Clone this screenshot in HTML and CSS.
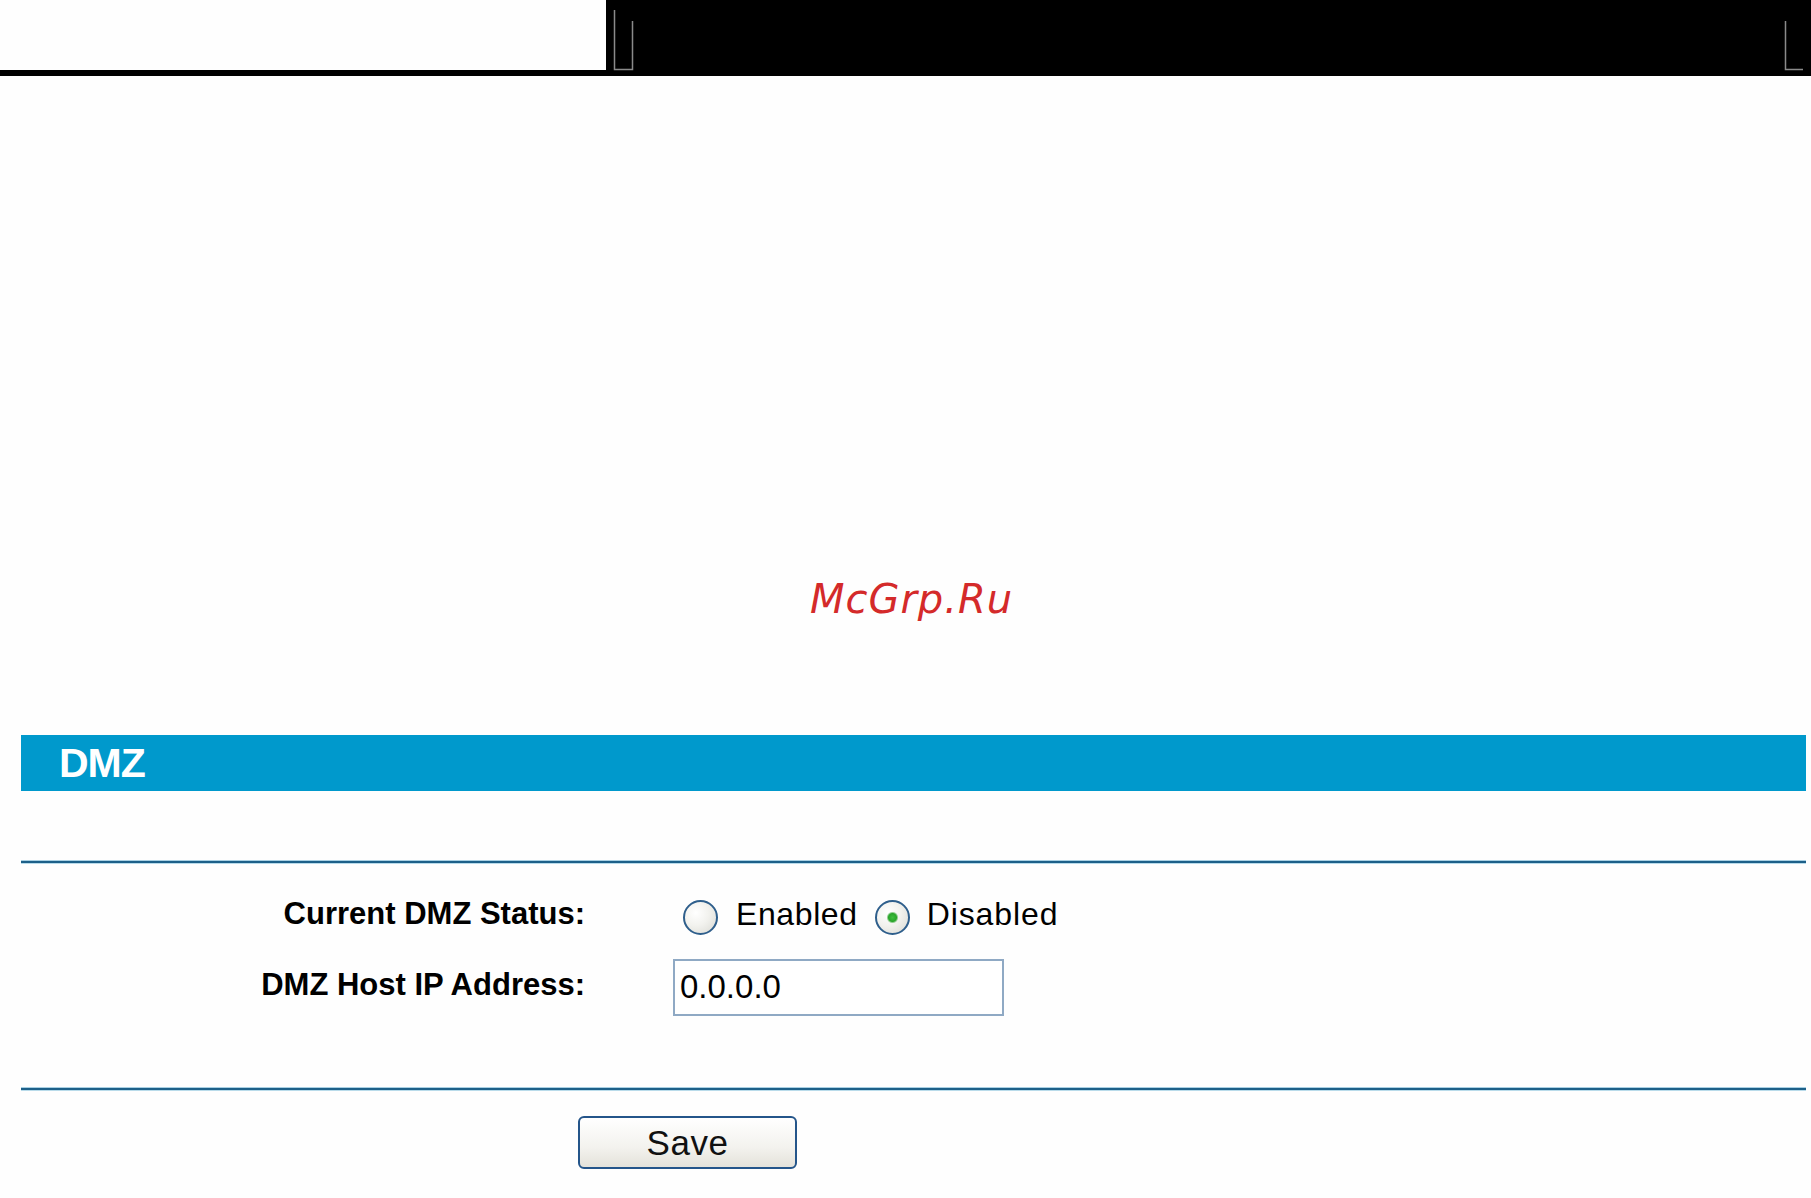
FILE: index.html
```html
<!DOCTYPE html>
<html>
<head>
<meta charset="utf-8">
<title>DMZ</title>
<link rel="stylesheet" href="styles.css">
</head>
<body>
<header class="top">
  <div class="top-left"></div>
  <div class="top-right">
    <svg class="frame" width="1205" height="76" viewBox="0 0 1205 76">
      <path d="M8.5 10 V69.5 H26.5 V21" fill="none" stroke="#8a8a8a" stroke-width="1.5"/>
      <path d="M1179.5 21 V69.5 H1197" fill="none" stroke="#8a8a8a" stroke-width="1.5"/>
    </svg>
  </div>
</header>

<div class="watermark">McGrp.Ru</div>

<main class="panel">
  <div class="title-bar">DMZ</div>
  <div class="rule rule-first"></div>
  <div class="form">
    <div class="row row-status">
      <div class="label">Current DMZ Status:</div>
      <div class="value">
        <label class="opt"><input type="radio" name="dmz" class="radio"><span class="opt-text">Enabled</span></label>
        <label class="opt opt-second"><input type="radio" name="dmz" class="radio" checked><span class="opt-text">Disabled</span></label>
      </div>
    </div>
    <div class="row row-ip">
      <div class="label">DMZ Host IP Address:</div>
      <div class="value">
        <input type="text" class="ip" value="0.0.0.0">
      </div>
    </div>
  </div>
  <div class="rule rule-second"></div>
  <div class="actions">
    <button class="save" type="button">Save</button>
  </div>
</main>
</body>
</html>
```

FILE: styles.css
```css
html, body {
  margin: 0;
  padding: 0;
  background: #fefefe;
}

body {
  width: 1811px;
  height: 1198px;
  overflow: hidden;
  font-family: "Liberation Sans", Arial, sans-serif;
  color: #000;
}

.top {
  display: flex;
  height: 76px;
  background: #000;
}

.top-left {
  width: 606px;
  height: 70px;
  background: #fefefe;
}

.top-right {
  flex: 1;
  height: 76px;
}

.frame {
  display: block;
}

.watermark {
  margin-top: 499px;
  height: 48px;
  line-height: 48px;
  text-align: center;
  padding-left: 12px;
  font-family: "DejaVu Sans", sans-serif;
  font-style: oblique;
  font-size: 40px;
  color: #d42a2a;
  letter-spacing: 1px;
}

.panel {
  margin: 112px 5px 0 21px;
}

.title-bar {
  height: 56px;
  line-height: 56px;
  background: #0099cc;
  color: #fff;
  font-weight: bold;
  font-size: 41px;
  padding-left: 38px;
  letter-spacing: -1px;
}

.rule {
  height: 4px;
  background: linear-gradient(#a9d0e3 0, #a9d0e3 1px, #1d6089 1px, #1d6089 3px, #b9dbea 3px);
}

.rule-first {
  margin-top: 69px;
}

.form {
  padding-top: 31px;
}

.row {
  display: flex;
  align-items: center;
}

.row-status {
  height: 44px;
  line-height: 38px;
}

.row-ip {
  margin-top: 20px;
  height: 57px;
  line-height: 51px;
}

.label {
  width: 564px;
  text-align: right;
  font-weight: bold;
  font-size: 31px;
  padding-bottom: 6px;
}

.value {
  margin-left: 88px;
  display: flex;
  align-items: center;
}

.opt {
  display: flex;
  align-items: center;
  font-size: 32px;
  margin-left: 10px;
}

.opt-text {
  padding-bottom: 6px;
  letter-spacing: 0.6px;
}

.opt-second {
  margin-left: 17px;
}

.opt-second .opt-text {
  letter-spacing: 0.9px;
}

.radio {
  appearance: none;
  -webkit-appearance: none;
  margin: 0 18px 0 0;
  width: 35px;
  height: 35px;
  border-radius: 50%;
  border: 2px solid #2f5f8c;
  background: radial-gradient(circle at 35% 35%, #ffffff 0, #f2f2ee 45%, #d9d9d3 100%);
  box-sizing: border-box;
}

.opt-second .radio {
  margin-right: 17px;
}

.radio:checked {
  background:
    radial-gradient(circle, #3fbf3f 0, #2aa52a 4px, transparent 6px),
    radial-gradient(circle at 35% 35%, #ffffff 0, #f2f2ee 45%, #d9d9d3 100%);
}

.ip {
  width: 331px;
  height: 57px;
  box-sizing: border-box;
  border: 2px solid #8fa9c4;
  padding: 0 0 2px 5px;
  font-family: "Liberation Sans", Arial, sans-serif;
  font-size: 33px;
  color: #000;
  background: #fff;
  outline: none;
}

.rule-second {
  margin-top: 71px;
}

.actions {
  padding-top: 25px;
  padding-left: 557px;
}

.save {
  width: 219px;
  height: 53px;
  box-sizing: border-box;
  border: 2px solid #24558a;
  border-radius: 6px;
  background: linear-gradient(#ffffff, #f3f2ee 60%, #e4e2da);
  font-family: "Liberation Sans", Arial, sans-serif;
  font-size: 35px;
  letter-spacing: 0.5px;
  color: #111;
  padding: 0;
  line-height: 49px;
}
```
